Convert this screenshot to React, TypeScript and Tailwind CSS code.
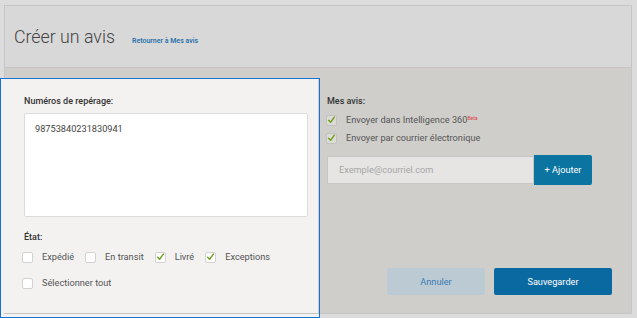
import React from 'react';

type BoxProps = { checked?: boolean; dim?: boolean };

const Box: React.FC<BoxProps> = ({ checked, dim }) => (
  <span
    className={
      'flex h-[11px] w-[11px] shrink-0 items-center justify-center rounded-[2px] border ' +
      (dim ? 'border-[#c4c2bf] bg-[#dddbd8]' : 'border-[#d2d2d2] bg-white')
    }
  >
    {checked && (
      <svg viewBox="0 0 12 12" className="h-[10px] w-[10px]">
        <path d="M2.2 6.4 L4.8 9 L9.8 2.2" fill="none" stroke="#6f9e1c" strokeWidth="1.9" strokeLinecap="round" strokeLinejoin="round" />
      </svg>
    )}
  </span>
);

const Check: React.FC<{ label: React.ReactNode; checked?: boolean; dim?: boolean }> = ({ label, checked, dim }) => (
  <label className="flex h-[12px] items-center gap-[9px] text-[9.2px] leading-[12px] text-[#555]">
    <Box checked={checked} dim={dim} />
    <span>{label}</span>
  </label>
);

export default function App() {
  return (
    <div className="relative h-[318px] w-[637px] overflow-hidden bg-[#dcdcdc] pl-[4px] pt-[5px] font-['Roboto',sans-serif]">
      {/* light strip behind the focused column */}
      <div className="absolute left-0 top-[78px] h-[240px] w-[319px] bg-[#f3f2f1]" />

      <div className="relative z-10 flex h-[309px] w-[628px] flex-col border border-[#c6c6c6]">
        {/* Header */}
        <div className="flex h-[62px] items-baseline border-b border-[#c9c3c6] bg-[#d8d8d8] pl-[9px] pt-[20px]">
          <h1 className="text-[17.8px] font-light leading-[22px] text-[#444]">Créer un avis</h1>
          <a className="ml-[17px] text-[7px] font-semibold text-[#2a72ab]">Retourner à Mes avis</a>
        </div>

        {/* Body */}
        <div className="flex flex-1 bg-[#d0cecb]">
          <div className="-ml-px mt-[11px] flex w-[314px] flex-col bg-[#f3f2f1] pl-[20px] pr-[10px] pt-[16px]">
            <p className="text-[9px] font-medium leading-[12px] text-[#333]">Numéros de repérage:</p>
            <div className="mt-[6px] h-[104px] w-[284px] rounded-[2px] border border-[#dcdcdc] bg-white pl-[10px] pt-[9px] text-[9.2px] leading-[12px] text-[#444]">
              98753840231830941
            </div>
            <p className="mt-[14px] text-[9px] font-medium leading-[12px] text-[#333]">État:</p>
            <div className="-ml-[2px] mt-[8px] flex gap-[11px]">
              <Check label="Expédié" />
              <Check label="En transit" />
              <Check label="Livré" checked />
              <Check label="Exceptions" checked />
            </div>
            <div className="-ml-[2px] mt-[14px]">
              <Check label="Sélectionner tout" />
            </div>
          </div>

          <div className="flex flex-1 flex-col pb-[18px] pl-[9px] pr-[19px] pt-[27px]">
            <p className="text-[9px] font-medium leading-[12px] text-[#333]">Mes avis:</p>
            <div className="-ml-px mt-[7px]">
              <Check
                dim
                checked
                label={
                  <>
                    Envoyer dans Intelligence 360
                    <sup className="relative -top-[3px] text-[5px] text-[#e0413a]">Beta</sup>
                  </>
                }
              />
            </div>
            <div className="-ml-px mt-[6px]">
              <Check dim checked label="Envoyer par courrier électronique" />
            </div>
            <div className="mt-[11px] flex h-[30px]">
              <div className="my-px flex w-[207px] items-center border border-[#c8c7c5] bg-[#e6e5e4] pl-[11px] text-[9.2px] text-[#a6a6a6]">
                Exemple@courriel.com
              </div>
              <button className="w-[58px] rounded-r-[2px] bg-[#0b74a1] text-[9.2px] text-white">+ Ajouter</button>
            </div>
            <div className="mt-auto flex justify-end gap-[9px]">
              <button className="h-[27px] w-[98px] rounded-[2px] bg-[#bccad4] text-[9.2px] text-[#3a7db3]">Annuler</button>
              <button className="h-[27px] w-[118px] rounded-[2px] bg-[#0b69a1] text-[9.2px] text-white">Sauvegarder</button>
            </div>
          </div>
        </div>
      </div>

      {/* focus outline around the left column */}
      <div className="pointer-events-none absolute left-0 top-[78px] z-20 h-[240px] w-[320px] border border-[#1673d6]" />
    </div>
  );
}
